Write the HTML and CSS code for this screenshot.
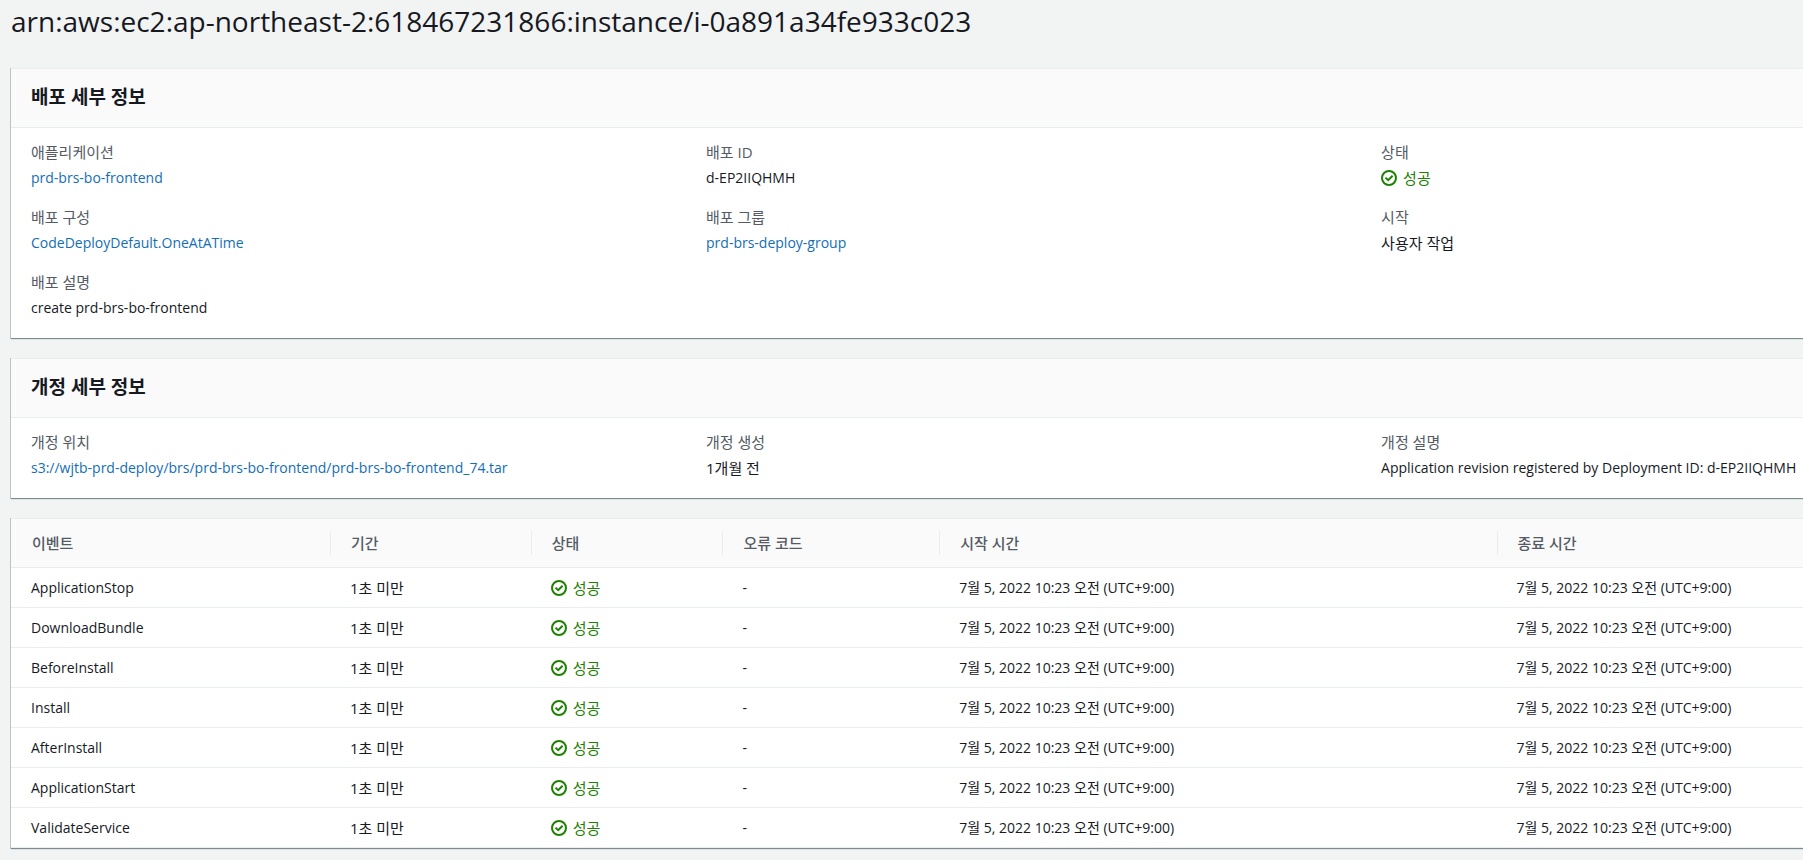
FILE: index.html
```html
<!DOCTYPE html>
<html lang="ko">
<head>
<meta charset="utf-8">
<title>배포 세부 정보</title>
<link rel="stylesheet" href="styles.css">
</head>
<body>
<svg class="sprite" aria-hidden="true">
  <symbol id="ok" viewBox="0 0 16 16">
    <circle cx="8" cy="8" r="7" fill="none" stroke="currentColor" stroke-width="2"/>
    <path d="M4.5 7.6 7.2 10.2 11.6 5.8" fill="none" stroke="currentColor" stroke-width="2"/>
  </symbol>
</svg>
<main class="page">
  <h1 class="title">arn:aws:ec2:ap-northeast-2:618467231866:instance/i-0a891a34fe933c023</h1>

  <section class="card">
    <h2 class="card-title">배포 세부 정보</h2>
    <dl class="details">
      <div class="field"><dt>애플리케이션</dt><dd><a href="#">prd-brs-bo-frontend</a></dd></div>
      <div class="field"><dt>배포 ID</dt><dd>d-EP2IIQHMH</dd></div>
      <div class="field"><dt>상태</dt><dd><span class="status"><svg class="icon"><use href="#ok"/></svg>성공</span></dd></div>
      <div class="field"><dt>배포 구성</dt><dd><a href="#">CodeDeployDefault.OneAtATime</a></dd></div>
      <div class="field"><dt>배포 그룹</dt><dd><a href="#">prd-brs-deploy-group</a></dd></div>
      <div class="field"><dt>시작</dt><dd class="hangul">사용자 작업</dd></div>
      <div class="field"><dt>배포 설명</dt><dd>create prd-brs-bo-frontend</dd></div>
    </dl>
  </section>

  <section class="card">
    <h2 class="card-title">개정 세부 정보</h2>
    <dl class="details">
      <div class="field"><dt>개정 위치</dt><dd><a href="#">s3://wjtb-prd-deploy/brs/prd-brs-bo-frontend/prd-brs-bo-frontend_74.tar</a></dd></div>
      <div class="field"><dt>개정 생성</dt><dd class="hangul">1개월 전</dd></div>
      <div class="field"><dt>개정 설명</dt><dd>Application revision registered by Deployment ID: d-EP2IIQHMH</dd></div>
    </dl>
  </section>

  <section class="card">
    <table class="events">
      <colgroup><col class="c-event"><col class="c-duration"><col class="c-status"><col class="c-error"><col class="c-start"><col></colgroup>
      <thead>
        <tr><th><span class="head">이벤트</span></th><th><span class="head">기간</span></th><th><span class="head">상태</span></th><th><span class="head">오류 코드</span></th><th><span class="head">시작 시간</span></th><th><span class="head">종료 시간</span></th></tr>
      </thead>
      <tbody>
        <tr><td>ApplicationStop</td><td class="hangul">1초 미만</td><td><span class="status"><svg class="icon"><use href="#ok"/></svg>성공</span></td><td>-</td><td>7월 5, 2022 10:23 오전 (UTC+9:00)</td><td>7월 5, 2022 10:23 오전 (UTC+9:00)</td></tr>
        <tr><td>DownloadBundle</td><td class="hangul">1초 미만</td><td><span class="status"><svg class="icon"><use href="#ok"/></svg>성공</span></td><td>-</td><td>7월 5, 2022 10:23 오전 (UTC+9:00)</td><td>7월 5, 2022 10:23 오전 (UTC+9:00)</td></tr>
        <tr><td>BeforeInstall</td><td class="hangul">1초 미만</td><td><span class="status"><svg class="icon"><use href="#ok"/></svg>성공</span></td><td>-</td><td>7월 5, 2022 10:23 오전 (UTC+9:00)</td><td>7월 5, 2022 10:23 오전 (UTC+9:00)</td></tr>
        <tr><td>Install</td><td class="hangul">1초 미만</td><td><span class="status"><svg class="icon"><use href="#ok"/></svg>성공</span></td><td>-</td><td>7월 5, 2022 10:23 오전 (UTC+9:00)</td><td>7월 5, 2022 10:23 오전 (UTC+9:00)</td></tr>
        <tr><td>AfterInstall</td><td class="hangul">1초 미만</td><td><span class="status"><svg class="icon"><use href="#ok"/></svg>성공</span></td><td>-</td><td>7월 5, 2022 10:23 오전 (UTC+9:00)</td><td>7월 5, 2022 10:23 오전 (UTC+9:00)</td></tr>
        <tr><td>ApplicationStart</td><td class="hangul">1초 미만</td><td><span class="status"><svg class="icon"><use href="#ok"/></svg>성공</span></td><td>-</td><td>7월 5, 2022 10:23 오전 (UTC+9:00)</td><td>7월 5, 2022 10:23 오전 (UTC+9:00)</td></tr>
        <tr><td>ValidateService</td><td class="hangul">1초 미만</td><td><span class="status"><svg class="icon"><use href="#ok"/></svg>성공</span></td><td>-</td><td>7월 5, 2022 10:23 오전 (UTC+9:00)</td><td>7월 5, 2022 10:23 오전 (UTC+9:00)</td></tr>
      </tbody>
    </table>
  </section>
</main>
</body>
</html>
```
FILE: styles.css
```css
* { box-sizing: border-box; }
body {
  margin: 0;
  background: #f2f3f3;
  color: #16191f;
  font: 14px/20px "Open Sans", "Noto Sans CJK KR", sans-serif;
}
.sprite { display: none; }
.page {
  display: flex;
  flex-direction: column;
  gap: 19px;
  padding: 3px 0 10px 11px;
}
.title { margin: 0 0 10px; font-size: 28px; line-height: 36px; font-weight: 400; }
.card {
  background: #fff;
  border-top: 1px solid #eaeded;
  border-bottom: 1px solid #7d8c90;
  box-shadow: 0 1px 0 rgba(0, 28, 36, .08), -1px 0 0 rgba(0, 28, 36, .22);
}
.card-title {
  margin: 0;
  padding: 14px 20px 16px;
  background: #fafafa;
  border-bottom: 1px solid #eaeded;
  font-size: 19px;
  line-height: 28px;
  font-weight: 700;
}
.details {
  display: grid;
  grid-template-columns: 8fr 8fr 5fr;
  row-gap: 19px;
  margin: 0;
  padding: 14px 0 20px 20px;
}
.field { display: flex; flex-direction: column; gap: 6px; white-space: nowrap; }
dt { color: #545b64; font-size: 15px; }
dd { display: flex; margin: 0; }
.hangul { font-size: 15px; }
a { color: #146eb4; text-decoration: none; }
a:hover { text-decoration: underline; }
.status { display: flex; align-items: center; gap: 6px; color: #1d8102; font-size: 15px; }
.icon { width: 16px; height: 16px; flex: none; }
.events { width: 100%; table-layout: fixed; border-collapse: collapse; white-space: nowrap; }
.c-event { width: 17.8%; }
.c-duration { width: 11.2%; }
.c-status { width: 10.7%; }
.c-error { width: 12.1%; }
.c-start { width: 31.1%; }
.events th { padding: 12px 0; background: #fafafa; text-align: left; font-size: 15px; font-weight: 500; color: #545b64; }
.head { display: block; padding: 0 20px; line-height: 24px; border-left: 1px solid #eaeded; }
th:first-child .head { border-left-color: transparent; }
.events td { height: 40px; padding: 0 20px; border-top: 1px solid #eaeded; }
.events tr:last-child td { border-bottom: 1px solid #eaeded; }
```
